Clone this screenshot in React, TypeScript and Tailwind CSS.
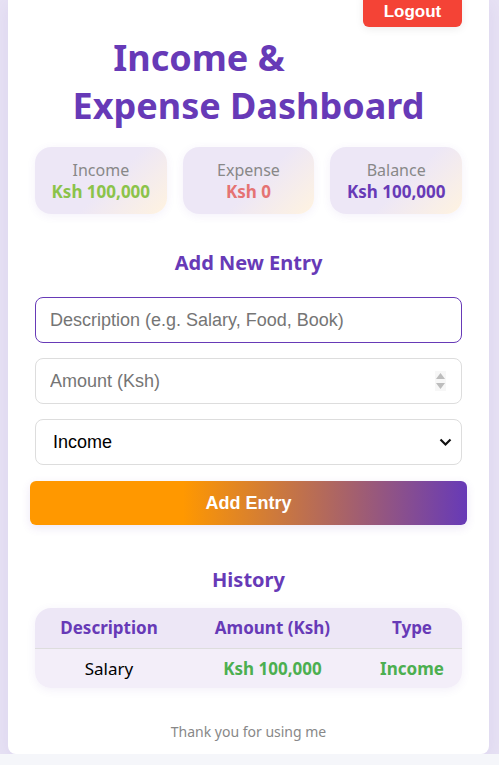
import React, { useState } from "react";

const stats = [
  { label: "Income", value: "Ksh 100,000", color: "text-[#8bc34a]" },
  { label: "Expense", value: "Ksh 0", color: "text-[#e57373]" },
  { label: "Balance", value: "Ksh 100,000", color: "text-[#673ab7]" },
];

export default function App() {
  const [desc, setDesc] = useState("");
  const [amount, setAmount] = useState("");
  const [type, setType] = useState("income");

  return (
    <div className="h-[765px] w-full overflow-hidden flex flex-col font-['Noto_Sans',sans-serif]">
      <div className="flex-1 bg-[#e7e2f4] pl-2 pr-[10px] flex flex-col">
        <div className="flex-1 bg-white rounded-b-lg px-[27px] flex flex-col shadow-[0_4px_20px_rgba(103,58,183,0.08)]">
          <div className="flex justify-end">
            <button className="-mt-2 h-[35px] w-[99px] bg-[#f44336] text-white font-bold text-[17px] rounded-md shadow-[0_2px_8px_rgba(0,0,0,0.08)] font-['Liberation_Sans',Arial,sans-serif] pt-1">
              Logout
            </button>
          </div>

          <h1 className="mt-[7px] text-center text-[#673ab7] font-bold text-[36px] leading-[48px]">
            <span className="block pr-[99px]">Income &amp;</span>
            <span className="block">Expense Dashboard</span>
          </h1>

          <div className="mt-[17px] grid grid-cols-3 gap-[16px]">
            {stats.map((s) => (
              <div
                key={s.label}
                className="h-[67px] rounded-2xl bg-[linear-gradient(135deg,#ede7f6_55%,#fff3e0)] shadow-[0_2px_10px_rgba(103,58,183,0.07)] flex flex-col items-center justify-center"
              >
                <p className="text-[#888] text-[16px] leading-[22px]">{s.label}</p>
                <p className={`${s.color} font-bold text-[17px] leading-[22px]`}>{s.value}</p>
              </div>
            ))}
          </div>

          <h2 className="mt-[35px] text-center text-[#673ab7] font-bold text-[20px] leading-[28px]">
            Add New Entry
          </h2>

          <div className="mt-[20px] flex flex-col gap-[15px] font-['Liberation_Sans',Arial,sans-serif]">
            <input
              type="text"
              value={desc}
              onChange={(e) => setDesc(e.target.value)}
              placeholder="Description (e.g. Salary, Food, Book)"
              className="h-[46px] w-full rounded-lg border border-[#673ab7] px-[14px] text-[18px] placeholder:text-[#757575] outline-none"
            />
            <div className="h-[46px] w-full rounded-lg border border-[#ddd] flex items-center pl-[14px] pr-[15px]">
              <input
                type="text"
                value={amount}
                onChange={(e) => setAmount(e.target.value)}
                placeholder="Amount (Ksh)"
                className="flex-1 text-[18px] placeholder:text-[#757575] outline-none"
              />
              <svg width="11" height="20" viewBox="0 0 11 20" className="bg-[#f7f7f7]">
                <path d="M5.5 2 L10 8 L1 8 Z" fill="#bdbdbd" />
                <path d="M1 12 L10 12 L5.5 18 Z" fill="#bdbdbd" />
              </svg>
            </div>
            <div className="relative">
              <select
                value={type}
                onChange={(e) => setType(e.target.value)}
                className="appearance-none h-[46px] w-full rounded-lg border border-[#ddd] bg-white pl-[17px] pr-[40px] text-[18px] text-black outline-none"
              >
                <option value="income">Income</option>
                <option value="expense">Expense</option>
              </select>
              <svg
                width="13"
                height="9"
                viewBox="0 0 13 9"
                className="pointer-events-none absolute right-[10px] top-[19px]"
              >
                <path d="M1.5 1.5 L6.5 6.5 L11.5 1.5" fill="none" stroke="#111" strokeWidth="2.2" />
              </svg>
            </div>
          </div>

          <button className="mt-[16px] -mx-[5px] h-[44px] rounded-md bg-[linear-gradient(90deg,#ff9800_35%,#673ab7)] text-white font-bold text-[18px] shadow-[0_3px_10px_rgba(103,58,183,0.12)] font-['Liberation_Sans',Arial,sans-serif]">
            Add Entry
          </button>

          <h2 className="mt-[41px] text-center text-[#673ab7] font-bold text-[20px] leading-[28px]">
            History
          </h2>

          <div className="mt-[14px] rounded-2xl overflow-hidden shadow-[0_2px_10px_rgba(103,58,183,0.08)]">
            <table className="w-full text-center">
              <thead>
                <tr className="bg-[#ede7f6] border-b border-[#ddd] h-[40px]">
                  <th className="w-[148px] text-[#673ab7] font-bold text-[17px]">Description</th>
                  <th className="text-[#673ab7] font-bold text-[17px]">Amount (Ksh)</th>
                  <th className="w-[100px] text-[#673ab7] font-bold text-[17px]">Type</th>
                </tr>
              </thead>
              <tbody>
                <tr className="bg-[#f3eef9] h-[40px]">
                  <td className="text-black text-[17px]">Salary</td>
                  <td className="text-[#4caf50] font-bold text-[17px]">Ksh 100,000</td>
                  <td className="text-[#4caf50] font-bold text-[17px]">Income</td>
                </tr>
              </tbody>
            </table>
          </div>

          <p className="mt-[33px] text-center text-[#888] text-[14px]">Thank you for using me</p>
        </div>
      </div>
      <div className="h-[11px] bg-[#f5f6fa]" />
    </div>
  );
}
